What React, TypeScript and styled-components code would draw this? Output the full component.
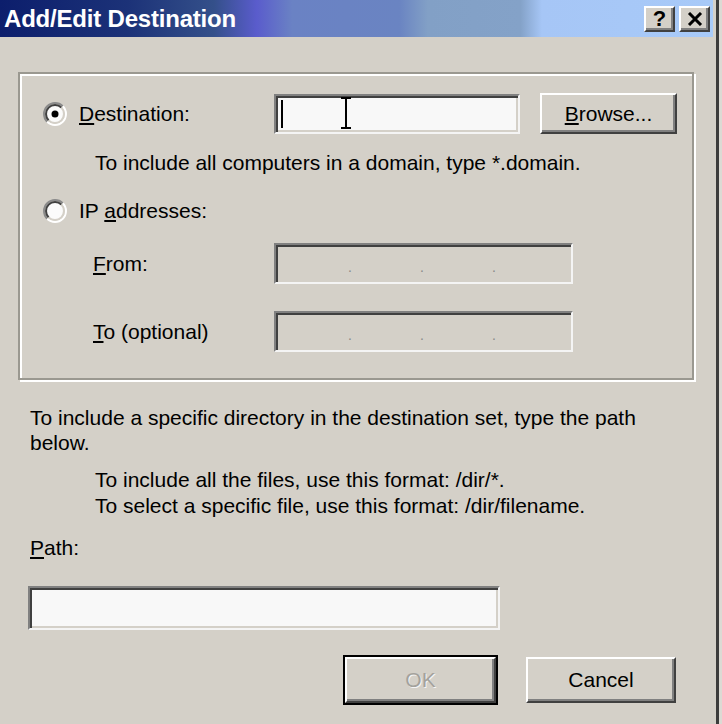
import React from 'react';
import styled, { createGlobalStyle } from 'styled-components';

const Global = createGlobalStyle`
  html, body {
    margin: 0;
    padding: 0;
    background: #dcdad4;
  }
  body {
    font-family: "Liberation Sans", Arial, sans-serif;
    color: #000;
  }
`;

const Window = styled.div`
  width: 719px;
  height: 724px;
  box-sizing: border-box;
  background: #d4d0c8;
  border-right: 3px solid #3c3c3c;
  padding-right: 3px;
  overflow: hidden;
`;

const TitleBar = styled.div`
  height: 37px;
  display: flex;
  align-items: center;
  padding: 0 3px 0 4px;
  background: linear-gradient(
    to right,
    #0c1e6c 0%,
    #1c3278 18%,
    #34508a 30%,
    #5a5ccc 36%,
    #6a82c4 41%,
    #6a84c2 56%,
    #82a0c6 60%,
    #84a2c8 73%,
    #a6c6f6 76%,
    #a8caf8 100%
  );
`;

const Title = styled.span`
  color: #fff;
  font-weight: bold;
  font-size: 24px;
  letter-spacing: -0.2px;
`;

const TitleButtons = styled.div`
  margin-left: auto;
  display: flex;
  gap: 4px;
`;

const CaptionButton = styled.div`
  width: 31px;
  height: 26px;
  box-sizing: border-box;
  background: #d4d0c8;
  border: 2px solid;
  border-color: #fff #404040 #404040 #fff;
  box-shadow: inset -2px -2px 0 #808080;
  display: flex;
  align-items: center;
  justify-content: center;
  font-weight: bold;
  font-size: 22px;
  line-height: 1;
`;

const Content = styled.div`
  padding: 35px 0 0 18px;
`;

const GroupBox = styled.div`
  width: 676px;
  height: 308px;
  box-sizing: border-box;
  border: 2px solid #9a9890;
  box-shadow: inset 2px 2px 0 #fff, 2px 2px 0 #fff;
  padding: 19px 0 27px 23px;
  display: flex;
  flex-direction: column;
`;

const Row = styled.div<{ $top?: number }>`
  display: flex;
  align-items: center;
  margin-top: ${p => p.$top ?? 0}px;
`;

const Label = styled.span<{ $width?: number; $indent?: number }>`
  font-size: 21px;
  line-height: 26px;
  white-space: nowrap;
  width: ${p => (p.$width ? `${p.$width}px` : 'auto')};
  margin-left: ${p => p.$indent ?? 0}px;
`;

const Hint = styled.div<{ $top?: number; $indent?: number }>`
  font-size: 21px;
  line-height: 26px;
  margin-top: ${p => p.$top ?? 0}px;
  margin-left: ${p => p.$indent ?? 0}px;
  white-space: nowrap;
`;

const RadioBox = styled.svg`
  width: 24px;
  height: 24px;
  margin-right: 12px;
  flex: none;
`;

const Field = styled.div<{ $width: number; $height: number; $disabled?: boolean }>`
  position: relative;
  width: ${p => p.$width}px;
  height: ${p => p.$height}px;
  box-sizing: border-box;
  background: ${p => (p.$disabled ? '#d4d0c8' : '#f8f8f8')};
  border: 2px solid;
  border-color: #808080 #f4f4f4 #f4f4f4 #808080;
  box-shadow: inset 2px 2px 0 #404040, inset -2px -2px 0 #d4d0c8;
  display: flex;
  align-items: center;
  flex: none;
`;

const Caret = styled.span`
  width: 2px;
  height: 28px;
  margin-left: 5px;
  background: #000;
`;

const IBeam = styled.svg`
  position: absolute;
  left: 62px;
  top: 0px;
  width: 16px;
  height: 34px;
`;

const IpDots = styled.div`
  display: flex;
  padding-left: 4px;
  align-self: flex-end;
  padding-bottom: 10px;
`;

const IpSegment = styled.span`
  width: 72px;
  display: flex;
  justify-content: flex-end;
  color: #8a8a8a;
  font-size: 14px;
  line-height: 10px;
`;

const Button = styled.div<{ $width: number; $height: number; $default?: boolean; $disabled?: boolean }>`
  width: ${p => p.$width}px;
  height: ${p => p.$height}px;
  box-sizing: border-box;
  flex: none;
  background: #d4d0c8;
  border: 2px solid;
  border-color: #fff #404040 #404040 #fff;
  box-shadow: inset -2px -2px 0 #808080;
  outline: ${p => (p.$default ? '2px solid #000' : 'none')};
  outline-offset: 0;
  display: flex;
  align-items: center;
  justify-content: center;
  font-size: 21px;
  color: ${p => (p.$disabled ? '#a4a29c' : '#000')};
  text-shadow: ${p => (p.$disabled ? '1px 1px 0 #f4f4f4' : 'none')};
`;

const BrowseButton = styled(Button)`
  margin-left: 20px;
`;

const Section = styled.div`
  width: 664px;
  padding-left: 12px;
  margin-top: 25px;
  display: flex;
  flex-direction: column;
`;

const Paragraph = styled.div`
  font-size: 21px;
  line-height: 25px;
  width: 640px;
`;

const Notes = styled.div`
  margin: 12px 0 0 65px;
  font-size: 21px;
  line-height: 26px;
`;

const PathLabel = styled.div`
  margin-top: 16px;
  font-size: 21px;
  line-height: 26px;
`;

const PathField = styled(Field)`
  margin: 25px 0 0 -2px;
`;

const ButtonRow = styled.div`
  display: flex;
  justify-content: flex-end;
  gap: 30px;
  padding-right: 18px;
  margin-top: 27px;
`;

function Radio({ checked }: { checked?: boolean }) {
  const a = 0.7071;
  const arc = (r: number, tl: boolean) => {
    const x1 = 12 - r * a, y1 = 12 + r * a, x2 = 12 + r * a, y2 = 12 - r * a;
    return tl
      ? `M${x1} ${y1} A${r} ${r} 0 0 1 ${x2} ${y2}`
      : `M${x2} ${y2} A${r} ${r} 0 0 1 ${x1} ${y1}`;
  };
  return (
    <RadioBox viewBox="0 0 24 24">
      <circle cx="12" cy="12" r="9" fill="#fbfbfb" />
      <path d={arc(11, true)} stroke="#8a8a8a" strokeWidth="2" fill="none" />
      <path d={arc(9, true)} stroke="#404040" strokeWidth="2" fill="none" />
      <path d={arc(11, false)} stroke="#ffffff" strokeWidth="2" fill="none" />
      <path d={arc(9, false)} stroke="#d4d0c8" strokeWidth="2" fill="none" />
      {checked && <circle cx="12" cy="12" r="3.5" fill="#000" />}
    </RadioBox>
  );
}

function IpField() {
  return (
    <Field $width={299} $height={41} $disabled>
      <IpDots>
        <IpSegment>.</IpSegment>
        <IpSegment>.</IpSegment>
        <IpSegment>.</IpSegment>
      </IpDots>
    </Field>
  );
}

export default function App() {
  return (
    <>
      <Global />
      <Window>
        <TitleBar>
          <Title>Add/Edit Destination</Title>
          <TitleButtons>
            <CaptionButton>?</CaptionButton>
            <CaptionButton>
              <svg width="16" height="14" viewBox="0 0 16 14">
                <path d="M2 1 L14 13 M14 1 L2 13" stroke="#000" strokeWidth="3" />
              </svg>
            </CaptionButton>
          </TitleButtons>
        </TitleBar>

        <Content>
          <GroupBox>
            <Row>
              <Radio checked />
              <Label $width={195}>
                <u>D</u>estination:
              </Label>
              <Field $width={246} $height={40}>
                <Caret />
                <IBeam viewBox="0 0 16 34">
                  <path d="M3 2 H13 M8 2 V32 M3 32 H13" stroke="#000" strokeWidth="2" fill="none" />
                </IBeam>
              </Field>
              <BrowseButton $width={137} $height={41}>
                <span>
                  <u>B</u>rowse...
                </span>
              </BrowseButton>
            </Row>
            <Hint $top={16} $indent={52}>
              To include all computers in a domain, type *.domain.
            </Hint>
            <Row $top={22}>
              <Radio />
              <Label>
                IP <u>a</u>ddresses:
              </Label>
            </Row>
            <Row $top={19}>
              <Label $width={181} $indent={50}>
                <u>F</u>rom:
              </Label>
              <IpField />
            </Row>
            <Row $top={27}>
              <Label $width={181} $indent={50}>
                <u>T</u>o (optional)
              </Label>
              <IpField />
            </Row>
          </GroupBox>

          <Section>
            <Paragraph>
              To include a specific directory in the destination set, type the path below.
            </Paragraph>
            <Notes>
              <div>To include all the files, use this format: /dir/*.</div>
              <div>To select a specific file, use this format: /dir/filename.</div>
            </Notes>
            <PathLabel>
              <u>P</u>ath:
            </PathLabel>
            <PathField $width={472} $height={44} />
            <ButtonRow>
              <Button $width={151} $height={46} $default $disabled>
                OK
              </Button>
              <Button $width={150} $height={46}>
                Cancel
              </Button>
            </ButtonRow>
          </Section>
        </Content>
      </Window>
    </>
  );
}
